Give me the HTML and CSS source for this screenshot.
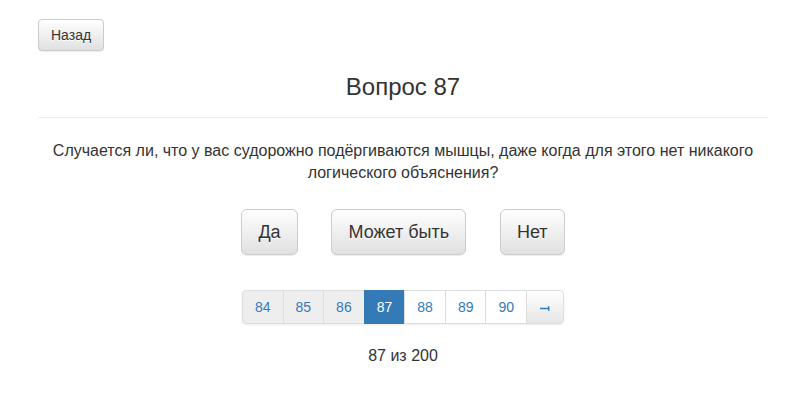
FILE: index.html
```html
<!DOCTYPE html>
<html lang="ru">
<head>
    <meta charset="UTF-8">
    <title>Вопрос 87</title>
    <link rel="stylesheet" href="styles.css">
</head>
<body>
<div class="container">
    <div class="top">
        <button type="button" class="btn">Назад</button>
    </div>
    <h3 class="title">Вопрос 87</h3>
    <hr>
    <p class="question">Случается ли, что у вас судорожно подёргиваются мышцы, даже когда для этого нет никакого логического объяснения?</p>
    <div class="answers">
        <button type="button" class="btn btn-lg">Да</button>
        <button type="button" class="btn btn-lg">Может быть</button>
        <button type="button" class="btn btn-lg">Нет</button>
    </div>
    <ul class="pagination">
        <li class="done"><a href="#">84</a></li>
        <li class="done"><a href="#">85</a></li>
        <li class="done"><a href="#">86</a></li>
        <li class="active"><a href="#">87</a></li>
        <li><a href="#">88</a></li>
        <li><a href="#">89</a></li>
        <li><a href="#">90</a></li>
        <li class="last"><a href="#"><svg width="10" height="5" viewBox="0 0 10 5"><path d="M0 2.5H8.5M8.7 0.3V4.7" stroke="#337ab7" stroke-width="1.5" fill="none"/></svg></a></li>
    </ul>
    <p class="counter">87 из 200</p>
</div>
</body>
</html>
```

FILE: styles.css
```css
body {
    margin: 0;
    font-family: "Liberation Sans", Arial, sans-serif;
    font-size: 14px;
    color: #333;
    background: #fff;
}

.container {
    width: 730px;
    margin-left: 38px;
    padding-top: 19px;
    text-align: center;
}

.top {
    text-align: left;
}

.btn {
    font-family: inherit;
    font-size: 14px;
    line-height: 18px;
    padding: 6px 12px;
    color: #333;
    border: 1px solid #ccc;
    border-radius: 4px;
    background-color: #f2f2f2;
    background-image: linear-gradient(to bottom, #fff 0, #e0e0e0 100%);
    text-shadow: 0 1px 0 #fff;
    box-shadow: inset 0 1px 0 rgba(255, 255, 255, .15), 0 1px 1px rgba(0, 0, 0, .075);
    cursor: pointer;
}

.btn-lg {
    font-size: 18px;
    line-height: 24px;
    padding: 10px 16px;
    border-radius: 6px;
    margin: 0 15px;
}

.title {
    font-size: 24px;
    font-weight: normal;
    line-height: 26px;
    margin: 23px 0 0;
}

hr {
    border: none;
    border-top: 1px solid #eee;
    margin: 17px 0 0;
}

.question {
    font-size: 16px;
    line-height: 22px;
    margin: 22px 0 0;
}

.answers {
    margin-top: 25px;
}

.pagination {
    display: inline-flex;
    list-style: none;
    padding: 0;
    margin: 35px 0 0;
    border-radius: 4px;
    box-shadow: 0 1px 2px rgba(0, 0, 0, .075);
}

.pagination li a {
    display: block;
    width: 41.6px;
    box-sizing: border-box;
    padding: 6px 0;
    line-height: 20px;
    font-size: 14px;
    color: #337ab7;
    text-decoration: none;
    background: #fff;
    border: 1px solid #ddd;
    margin-left: -1px;
}

.pagination li:first-child a {
    margin-left: 0;
    border-radius: 4px 0 0 4px;
}

.pagination li.done a {
    background: #eee;
}

.pagination li.active a {
    background: #337ab7;
    border-color: #337ab7;
    color: #fff;
}

.pagination li.last a {
    width: 38px;
    border-radius: 0 4px 4px 0;
    background-image: linear-gradient(to bottom, #fff 0, #e6e6e6 100%);
}

.pagination li.last svg {
    vertical-align: middle;
}

.counter {
    font-size: 16px;
    line-height: 22px;
    margin: 21px 0 0;
}
```
